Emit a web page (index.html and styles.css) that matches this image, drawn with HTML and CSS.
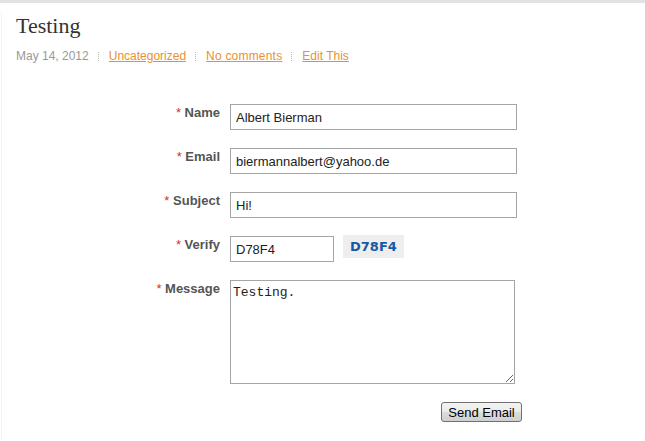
FILE: index.html
```html
<!DOCTYPE html>
<html>
<head>
<meta charset="utf-8">
<link rel="stylesheet" href="styles.css">
</head>
<body>
<div class="page">
  <h1 class="title">Testing</h1>
  <div class="meta">
    <span class="date">May 14, 2012</span>
    <span class="sep"></span>
    <a href="#" class="link">Uncategorized</a>
    <span class="sep"></span>
    <a href="#" class="link wide">No comments</a>
    <span class="sep"></span>
    <a href="#" class="link">Edit This</a>
  </div>
  <form class="form">
    <label class="label"><span class="req">*</span> Name</label>
    <input class="field" type="text" value="Albert Bierman">
    <label class="label"><span class="req">*</span> Email</label>
    <input class="field" type="text" value="biermannalbert@yahoo.de">
    <label class="label"><span class="req">*</span> Subject</label>
    <input class="field" type="text" value="Hi!">
    <label class="label"><span class="req">*</span> Verify</label>
    <div class="verify">
      <input class="field short" type="text" value="D78F4">
      <span class="captcha">D78F4</span>
    </div>
    <label class="label"><span class="req">*</span> Message</label>
    <textarea class="message">Testing.</textarea>
    <div class="spacer"></div>
    <div class="actions"><button type="button" class="btn">Send Email</button></div>
  </form>
</div>
</body>
</html>
```
FILE: styles.css
```css
html, body {
  margin: 0;
  padding: 0;
  background: #fff;
}
body {
  border-top: 3px solid #e2e2e2;
  font-family: "Liberation Sans", Arial, sans-serif;
}
.page {
  margin-left: 1px;
  border-left: 1px solid #f2f2f2;
  padding-left: 14px;
  min-height: 438px;
  box-sizing: border-box;
}
.title {
  margin: 10px 0 0 0;
  font-family: "Liberation Serif", Georgia, serif;
  font-weight: normal;
  font-size: 22px;
  line-height: 26px;
  color: #333;
}
.meta {
  margin-top: 10px;
  display: flex;
  align-items: center;
  font-size: 12px;
  line-height: 15px;
}
.date {
  color: #999;
}
.link {
  color: #e8912f;
  text-decoration: underline;
}
.link.wide {
  letter-spacing: 0.2px;
}
.sep {
  display: block;
  width: 0;
  height: 9px;
  border-left: 1px dotted #bbb;
  margin: 0 10px 0 9px;
}
.form {
  margin-top: 40px;
  display: grid;
  grid-template-columns: 204px auto;
  column-gap: 10px;
  row-gap: 18px;
  align-items: start;
}
.label {
  text-align: right;
  font-weight: bold;
  font-size: 13px;
  line-height: 15px;
  color: #555;
  padding-top: 1px;
}
.req {
  color: #c33;
  font-weight: normal;
}
.field {
  box-sizing: border-box;
  width: 287px;
  height: 26px;
  margin: 0;
  border: 1px solid #a5a5a5;
  padding: 0 5px;
  font-family: "Liberation Sans", Arial, sans-serif;
  font-size: 13px;
  color: #222;
  background: #fff;
  outline: none;
  justify-self: start;
}
.field.short {
  width: 104px;
}
.verify {
  display: flex;
  align-items: flex-start;
}
.captcha {
  margin: -1px 0 0 9px;
  height: 23px;
  line-height: 23px;
  padding: 0 7px;
  background: #eeeeee;
  color: #1559a3;
  font-family: "DejaVu Sans", Verdana, sans-serif;
  font-weight: bold;
  font-size: 13px;
}
.message {
  box-sizing: border-box;
  width: 285px;
  height: 104px;
  margin: 0;
  border: 1px solid #a5a5a5;
  padding: 4px 2px;
  font-family: "Liberation Mono", "Courier New", monospace;
  font-size: 13px;
  color: #222;
  outline: none;
  justify-self: start;
}
.actions {
  width: 292px;
  display: flex;
  justify-content: flex-end;
}
.btn {
  box-sizing: border-box;
  width: 81px;
  height: 20px;
  padding: 0;
  border: 1px solid #707070;
  border-radius: 3px;
  background: linear-gradient(#f2f2f2, #ebebeb 50%, #dddddd 50%, #cfcfcf);
  font-family: "Liberation Sans", Arial, sans-serif;
  font-size: 13px;
  color: #000;
}
```
